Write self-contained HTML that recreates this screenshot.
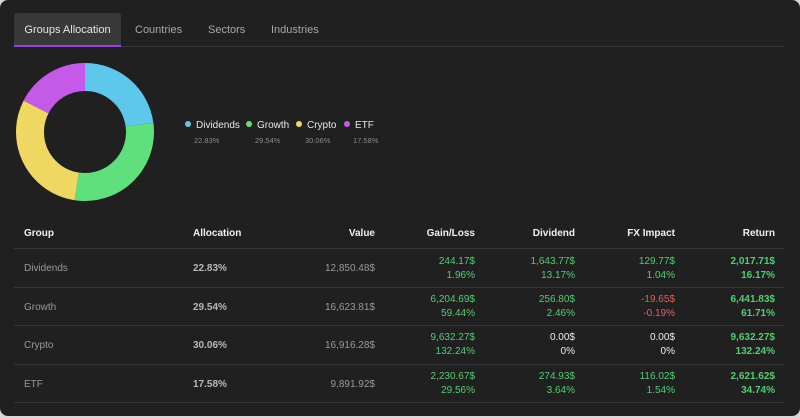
<!DOCTYPE html>
<html><head><meta charset="utf-8"><style>
*{margin:0;padding:0;box-sizing:border-box}
body{width:800px;height:418px;background:#d8d8d8;font-family:"Liberation Sans",sans-serif;overflow:hidden}
.card{position:absolute;left:0;top:0;width:800px;height:416px;background:#202020;border-radius:8px}
.tabs{position:absolute;left:14px;top:13px;width:771px;height:34px;border-bottom:1px solid #363636}
.tab{position:absolute;top:1px;height:33px;line-height:33px;font-size:11px;color:#a8a8a8}
.tab.act{top:0;left:0;width:107px;background:#383838;color:#e6e6e6;text-align:center;border-bottom:2px solid #9b3fe0;border-radius:3px 3px 0 0;height:34px;line-height:35px}
.leg{position:absolute;top:120px;font-size:10px;color:#e8e8e8}
.leg i{display:inline-block;width:6px;height:6px;border-radius:50%;margin-right:5px;vertical-align:1px}
.pc{position:absolute;top:136px;font-size:7.5px;color:#8a8a8a}
.row{position:absolute;left:14px;width:771px;border-bottom:1px solid #353535}
.c{position:absolute;font-size:10px;line-height:14px}
.h{font-weight:bold;color:#f0f0f0;top:9px}
.r{text-align:right;width:100px}
.g{color:#55cc72}.w{color:#eee}.red{color:#e0605e}.gr{color:#9a9a9a}.al{color:#b8b8b8;font-weight:bold}
</style></head><body><div class="card">
<div class="tabs">
<div class="tab act">Groups Allocation</div>
<div class="tab" style="left:121px">Countries</div>
<div class="tab" style="left:194px">Sectors</div>
<div class="tab" style="left:257px">Industries</div>
</div>
<svg style="position:absolute;left:0;top:0" width="200" height="210">
<g transform="translate(85,132) rotate(-90)" fill="none" stroke-width="28">
<circle r="55" stroke="#5ec8ec" stroke-dasharray="78.9 400" />
<circle r="55" stroke="#5fe07c" stroke-dasharray="0 78.9 102.1 400" />
<circle r="55" stroke="#efd862" stroke-dasharray="0 181 103.9 400" />
<circle r="55" stroke="#c65ae8" stroke-dasharray="0 284.9 60.8 400" />
</g></svg>
<div class="leg" style="left:185px"><i style="background:#5ec8ec"></i>Dividends</div>
<div class="leg" style="left:246px"><i style="background:#5fe07c"></i>Growth</div>
<div class="leg" style="left:296px"><i style="background:#efd862"></i>Crypto</div>
<div class="leg" style="left:344px"><i style="background:#c65ae8"></i>ETF</div>
<div class="pc" style="left:194px">22.83%</div>
<div class="pc" style="left:255px">29.54%</div>
<div class="pc" style="left:305px">30.06%</div>
<div class="pc" style="left:353px">17.58%</div>

<div class="row" style="top:218px;height:31px">
<div class="c h" style="left:10px">Group</div>
<div class="c h" style="left:179px">Allocation</div>
<div class="c h r" style="left:261px">Value</div>
<div class="c h r" style="left:361px">Gain/Loss</div>
<div class="c h r" style="left:461px">Dividend</div>
<div class="c h r" style="left:561px">FX Impact</div>
<div class="c h r" style="left:661px">Return</div>
</div>

<div class="row" style="top:249px;height:39px">
<div class="c gr" style="left:10px;top:13px">Dividends</div>
<div class="c al" style="left:179px;top:13px">22.83%</div>
<div class="c gr r" style="left:261px;top:13px">12,850.48$</div>
<div class="c g r" style="left:361px;top:6px">244.17$<br>1.96%</div>
<div class="c g r" style="left:461px;top:6px">1,643.77$<br>13.17%</div>
<div class="c g r" style="left:561px;top:6px">129.77$<br>1.04%</div>
<div class="c g r" style="left:661px;top:6px;font-weight:bold">2,017.71$<br>16.17%</div>
</div>
<div class="row" style="top:288px;height:38px">
<div class="c gr" style="left:10px;top:13px">Growth</div>
<div class="c al" style="left:179px;top:13px">29.54%</div>
<div class="c gr r" style="left:261px;top:13px">16,623.81$</div>
<div class="c g r" style="left:361px;top:5px">6,204.69$<br>59.44%</div>
<div class="c g r" style="left:461px;top:5px">256.80$<br>2.46%</div>
<div class="c red r" style="left:561px;top:5px">-19.65$<br>-0.19%</div>
<div class="c g r" style="left:661px;top:5px;font-weight:bold">6,441.83$<br>61.71%</div>
</div>
<div class="row" style="top:326px;height:39px">
<div class="c gr" style="left:10px;top:13px">Crypto</div>
<div class="c al" style="left:179px;top:13px">30.06%</div>
<div class="c gr r" style="left:261px;top:13px">16,916.28$</div>
<div class="c g r" style="left:361px;top:5px">9,632.27$<br>132.24%</div>
<div class="c w r" style="left:461px;top:5px">0.00$<br>0%</div>
<div class="c w r" style="left:561px;top:5px">0.00$<br>0%</div>
<div class="c g r" style="left:661px;top:5px;font-weight:bold">9,632.27$<br>132.24%</div>
</div>
<div class="row" style="top:365px;height:38px">
<div class="c gr" style="left:10px;top:13px">ETF</div>
<div class="c al" style="left:179px;top:13px">17.58%</div>
<div class="c gr r" style="left:261px;top:13px">9,891.92$</div>
<div class="c g r" style="left:361px;top:5px">2,230.67$<br>29.56%</div>
<div class="c g r" style="left:461px;top:5px">274.93$<br>3.64%</div>
<div class="c g r" style="left:561px;top:5px">116.02$<br>1.54%</div>
<div class="c g r" style="left:661px;top:5px;font-weight:bold">2,621.62$<br>34.74%</div>
</div>
</div></body></html>
